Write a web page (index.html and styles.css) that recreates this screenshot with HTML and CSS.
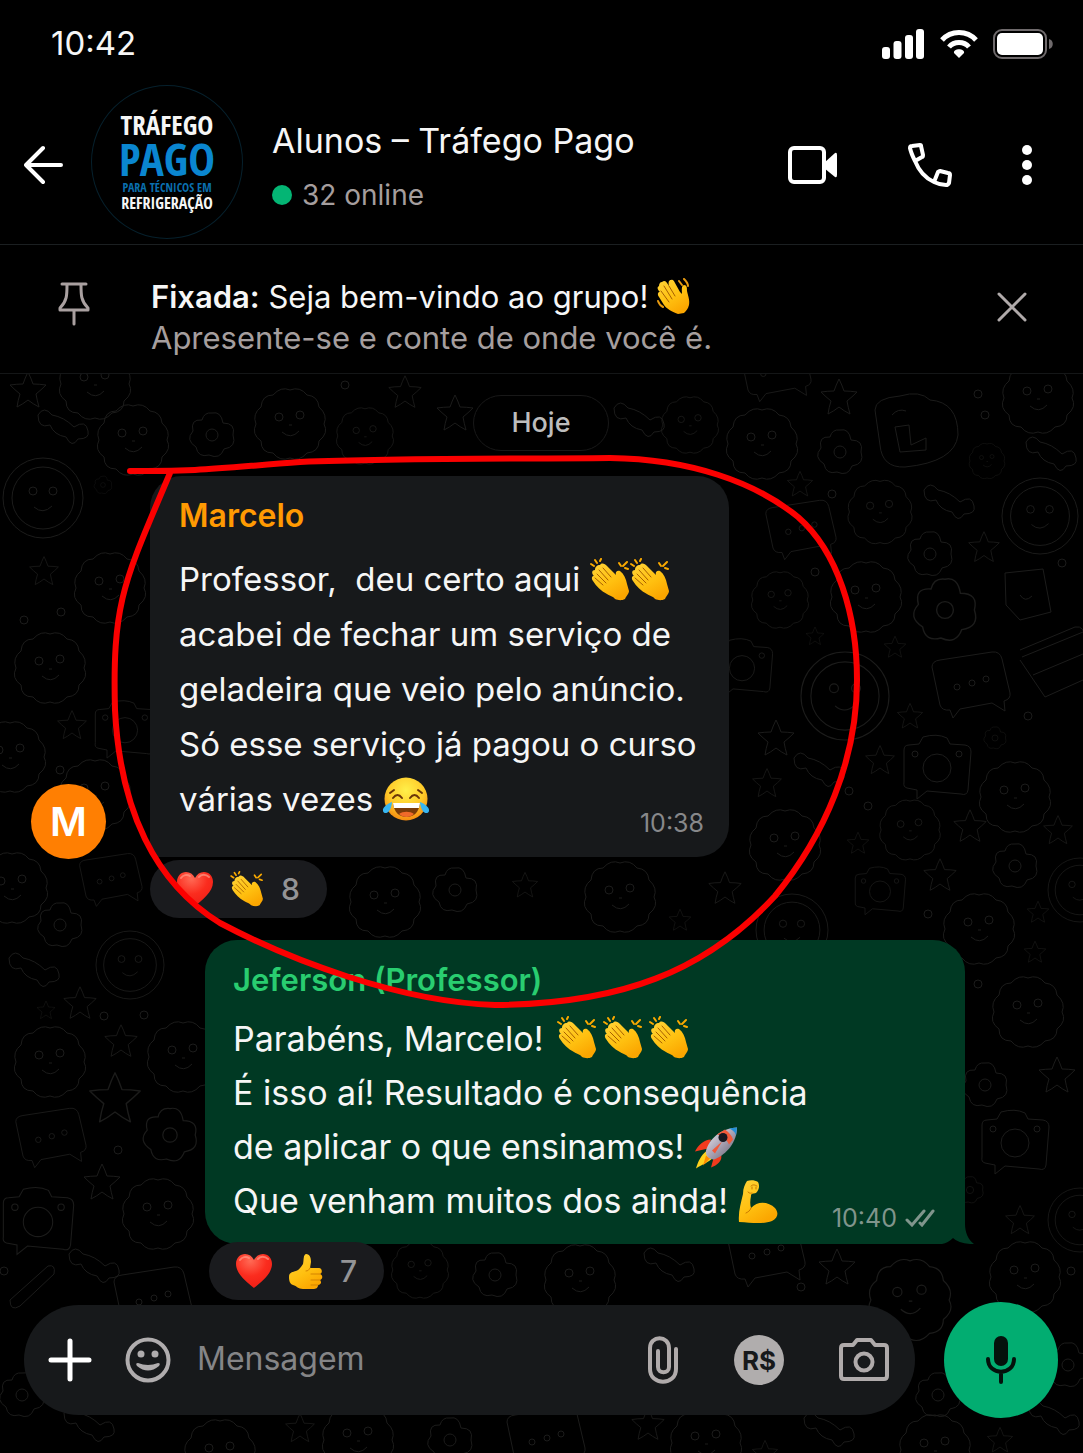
FILE: index.html
```html
<!DOCTYPE html>
<html lang="pt-BR">
<head>
<meta charset="utf-8">
<meta name="viewport" content="width=device-width, initial-scale=1">
<title>Alunos – Tráfego Pago</title>
<link rel="stylesheet" href="styles.css">
</head>
<body>
<svg class="defs" width="0" height="0" aria-hidden="true">
  <defs>
    <linearGradient id="skin" x1="0" y1="0" x2="0.6" y2="1"><stop offset="0" stop-color="#ffd338"/><stop offset="0.6" stop-color="#ffc010"/><stop offset="1" stop-color="#fba600"/></linearGradient>
    <radialGradient id="face" cx="0.5" cy="0.3" r="0.7"><stop offset="0" stop-color="#fff04a"/><stop offset="0.6" stop-color="#ffc928"/><stop offset="1" stop-color="#f48a10"/></radialGradient>
    <radialGradient id="love" cx="0.4" cy="0.2" r="0.9"><stop offset="0" stop-color="#ff6a55"/><stop offset="0.5" stop-color="#fb2c1e"/><stop offset="1" stop-color="#ec1c14"/></radialGradient>
    <linearGradient id="hull" x1="0" y1="0" x2="1" y2="1"><stop offset="0" stop-color="#f4f2f8"/><stop offset="0.5" stop-color="#a9a3b4"/><stop offset="1" stop-color="#5c5868"/></linearGradient>
  </defs>
  <symbol id="clap" viewBox="0 0 40 43">
    <path fill="url(#skin)" d="M10 7C12 4 15 6 17 8L26 17C25 14 27 12 30 13C34 16 36 21 37 26L39 33C39 36 36 38 35 41C31 43 28 42 25 41C23 38 20 38 17 36C11 33 6 28 3 23C1 20 2 18 4 18C1 15 2 12 5 12C5 9 7 7 10 7Z"/>
    <path fill="none" stroke="#a85f00" stroke-linecap="round" d="M13 10l8 9M9 12l9 10M7 16l9 9M5 20l8 7"/>
    <path fill="none" stroke="#f9a900" stroke-width="2" stroke-linecap="round" d="M1 6l3 2M5 2l2 3M11 1l-1 2M29 5l2 3M37 4l-4 4M35 10l3 1"/>
  </symbol>
  <symbol id="wave" viewBox="0 0 34 36">
    <path fill="url(#skin)" d="M5 4C7 2 9 3 10 5L12 8C11 4 12 2 14 2C16 1 17 3 18 5L23 14L25 16C25 12 24 8 27 7C30 7 30 10 30 13C31 18 33 22 32 27C31 31 29 33 27 35L21 36C14 33 10 31 7 27L2 19C0 16 1 14 3 14C0 11 0 9 2 8C2 6 3 4 5 4Z"/>
    <path fill="none" stroke="#a85f00" stroke-linecap="round" d="M12 8l6 10M7 8l8 13M4 13l8 11"/>
    <path fill="none" stroke="#e79a10" stroke-width="2" stroke-linecap="round" d="M22 3l3 4M27 1c2 2 4 4 4 7M1 23c1 3 3 5 5 6"/>
  </symbol>
  <symbol id="joy" viewBox="0 0 48 44">
    <circle cx="24" cy="22" r="21.500" fill="url(#face)"/>
    <path fill="none" stroke="#6b3508" stroke-width="2" stroke-linecap="round" d="M11 21c3-4 6-4 9 0M28 21c3-4 6-4 9 0M8 16l4-3M40 16l-4-3"/>
    <path fill="#7a3b08" d="M11 26h27c-1 9-6 14-13.500 14S12 35 11 26z"/><path fill="#fff" d="M11 26h27l-1 5H12z"/><path fill="#f06a2a" d="M17 37c4-3 11-3 15 0-4 4-11 4-15 0z"/>
    <path fill="#38b6f2" d="M10 25C7 26 0 30 1 34C2 38 9 37 10 25ZM38 25C41 26 48 30 47 34C46 38 39 37 38 25Z"/>
  </symbol>
  <symbol id="heart" viewBox="0 0 36 34">
    <path fill="url(#love)" d="M18 34C11 28 0 20 0 10C0 4 4 0 9 0C13 0 16 2 18 6C20 2 23 0 27 0C32 0 36 4 36 10C36 20 25 28 18 34Z"/>
    <path fill="none" stroke="#ff9a88" stroke-width="2" stroke-linecap="round" opacity="0.700" d="M4 6C6 3 10 2 13 4M22 5C24 2 29 2 32 5"/>
  </symbol>
  <symbol id="thumb" viewBox="0 0 34 35">
    <path fill="url(#skin)" d="M14 10C15 6 14 1 17 0C21 0 22 4 22 8L21 14H30C33 14 34 19 31 20C34 21 34 25 31 26C33 28 32 31 29 31C29 34 27 35 24 35H14C9 35 8 32 4 31C1 30 0 27 0 23C0 18 4 18 7 17C10 16 12 13 14 10Z"/>
    <path fill="none" stroke="#d48300" stroke-linecap="round" d="M31 20h-9M31 26h-9M29 31h-7M21 14c-1 2-2 3-4 3"/>
  </symbol>
  <symbol id="rocket" viewBox="0 0 44 42">
    <path fill="#ffd21e" d="M12 25L19 31C15 36 8 38 2 42C4 35 7 29 12 25Z"/><path fill="#ff8a00" d="M12 29l4 3-7 7z"/>
    <path fill="#f23a1d" d="M17 13C10 13 4 19 1 25L14 22ZM27 28C29 34 23 39 17 41L20 30Z"/>
    <path fill="url(#hull)" d="M12 24C15 13 26 2 43 1C43 15 33 28 20 33C15 33 11 29 12 24Z"/>
    <path fill="#f05a3a" d="M23 8l8-5c4 3 7 6 8 10l-4 5C33 13 28 9 23 8ZM18 24L28 15l-7 12z"/>
    <path fill="#2490d8" d="M35 2l8-1-1 8C41 5 38 3 35 2Z"/><circle cx="29" cy="11" r="4.500" fill="#171820"/>
  </symbol>
  <symbol id="biceps" viewBox="0 0 40 43">
    <path fill="url(#skin)" d="M5 14C5 8 7 4 9 1C12 0 17 0 20 2C22 6 21 10 18 13C15 14 13 13 13 16C12 21 12 25 13 28C20 20 31 22 37 28C41 33 40 38 34 41C26 44 15 43 1 42C0 32 3 23 5 14Z"/>
    <path fill="none" stroke="#c97900" stroke-linecap="round" d="M13 6c2-2 4-1 6 0M14 7v2M18 7v2M10 12c2 2 3 1 4 1M13 28c-1 3-3 4-5 5"/>
  </symbol>
</svg>

<div class="phone">
  <div class="status">
    <span class="clock">10:42</span>
    <div class="status-icons">
      <svg width="43" height="30" viewBox="0 0 43 30" fill="#fff" aria-hidden="true"><rect x="0" y="18" width="8" height="12" rx="3"/><rect x="11.500" y="12" width="8" height="18" rx="3"/><rect x="23" y="6" width="8" height="24" rx="3"/><rect x="34" y="0" width="8" height="30" rx="3"/></svg>
      <svg width="38" height="30" viewBox="0 0 38 30" fill="none" stroke="#fff" stroke-width="5" aria-hidden="true"><path d="M2 11C11 1 27 1 36 11M9 18C14 12 24 12 29 18"/><path fill="#fff" stroke="none" d="M19 29l-5-5c-1-5 11-5 10 0z"/></svg>
      <svg width="60" height="30" viewBox="0 0 60 30" aria-hidden="true"><rect x="1" y="1" width="52" height="28" rx="8" fill="none" stroke="#6f6a6c" stroke-width="2"/><rect x="4" y="4" width="46" height="22" rx="5" fill="#fff"/><path fill="#6f6a6c" d="M56 10c5 1 5 9 0 10z"/></svg>
    </div>
  </div>

  <header class="header">
    <button class="icon-btn" type="button" aria-label="Voltar"><svg width="40" height="40" viewBox="0 0 40 40" fill="none" stroke="#fff" stroke-width="4" stroke-linecap="round" stroke-linejoin="round"><path d="M37 20H2M19 3L2 20l17 17"/></svg></button>
    <div class="logo">
      <span class="logo-1">TRÁFEGO</span>
      <span class="logo-2">PAGO</span>
      <span class="logo-3">PARA TÉCNICOS EM</span>
      <span class="logo-4">REFRIGERAÇÃO</span>
    </div>
    <div class="group">
      <h1>Alunos – Tráfego Pago</h1>
      <p><span class="dot"></span>32 online</p>
    </div>
    <nav class="actions" aria-label="Ações do grupo">
      <button class="icon-btn" type="button" aria-label="Chamada de vídeo"><svg width="50" height="40" viewBox="0 0 50 40"><rect x="2" y="3" width="34" height="34" rx="4" fill="none" stroke="#fff" stroke-width="4"/><path fill="#fff" d="M36 18l11-10q2-1 2 2v20q0 3-2 2L36 23z"/></svg></button>
      <button class="icon-btn" type="button" aria-label="Ligar"><svg width="44" height="44" viewBox="0 0 44 44" fill="none" stroke="#fff" stroke-width="4" stroke-linejoin="round"><path d="M4 3L12 2Q13 2 13 3L15 12Q15 14 14 14L7 18Q3 10 2 5Q2 3 4 3ZM7 18C11 28 17 35 26 39L30 29Q31 28 32 28L40 30Q42 30 42 32L41 40Q40 42 38 42Q32 42 26 39"/></svg></button>
      <button class="icon-btn" type="button" aria-label="Mais opções"><svg width="10" height="40" viewBox="0 0 10 40" fill="#fff"><circle cx="5" cy="5" r="5"/><circle cx="5" cy="20" r="5"/><circle cx="5" cy="35" r="5"/></svg></button>
    </nav>
  </header>

  <section class="pinned" aria-label="Mensagem fixada">
    <svg class="pin" width="32" height="44" viewBox="0 0 32 44" fill="none" stroke="#a9a0a0" stroke-width="3" stroke-linecap="round" stroke-linejoin="round" aria-hidden="true"><path d="M4 2H28M9 3C9 13 9 19 2 26V28H30V26C23 19 23 13 23 3M16 28V42"/></svg>
    <p><strong>Fixada:</strong> Seja bem-vindo ao grupo! <svg class="em em-wave" role="img" aria-label="👋"><use href="#wave"/></svg><br><span>Apresente-se e conte de onde você é.</span></p>
    <button class="icon-btn close" type="button" aria-label="Fechar"><svg width="30" height="30" viewBox="0 0 30 30" fill="none" stroke="#b0aaaa" stroke-width="3" stroke-linecap="round"><path d="M2 2l26 26M28 2L2 28"/></svg></button>
  </section>

  <main class="chat">
    <svg class="wallpaper" viewBox="0 374 1083 1079" preserveAspectRatio="xMinYMin slice" fill="none" aria-hidden="true">
      <defs>
        <path id="w-star" stroke-linejoin="round" d="M0-18Q3-12 5-6Q11-6 18-5Q13 0 8 4Q9 10 11 17Q5 14 0 10Q-5 14-11 17Q-10 10-8 4Q-13 0-18-5Q-11-6-5-6Q-3-12 0-18Z"/>
        <path id="w-edge" d="M34 0Q39 9 29 17Q29 28 17 29Q9 38 0 34Q-10 38-17 29Q-29 29-29 17Q-39 10-34 0Q-38-10-29-17Q-28-29-17-29Q-9-38 0-34Q10-38 17-29Q28-28 29-17Q38-9 34 0Z"/>
        <g id="w-smile"><use href="#w-edge"/><circle cx="-11" cy="-7" r="4"/><circle cx="10" cy="-9" r="4"/><path d="M-8 8Q1 16 9 7M-1 1l3 0"/></g>
        <g id="w-ring"><circle r="40"/><circle r="31"/><circle cx="-10" cy="-7" r="4"/><circle cx="10" cy="-7" r="4"/><path d="M-9 9Q0 17 9 8"/></g>
        <g id="w-flower"><path d="M0-22Q9-24 11-12Q24-12 21 0Q25 12 12 14Q8 25-3 20Q-14 23-16 12Q-27 5-19-4Q-22-16-10-15Q-8-23 0-22Z"/><circle r="6"/></g>
        <g id="w-cam"><path d="M-33-20Q-33-25-28-25L-18-26L-14-33Q0-37 10-32L13-26L28-25Q34-24 34-18L31 20Q30 26 24 24L-10 21L-20 29V20L-30 18Q-34 17-33 12Z"/><circle cy="-2" r="14"/><circle cx="-22" cy="-16" r="3"/><circle cx="22" cy="-16" r="3"/></g>
        <g id="w-bubble"><path d="M-38-18Q-38-24-30-25L22-33Q30-34 32-26L40 8Q41 14 34 16L35 26L22 18L-10 24L-17 33L-20 25Q-28 26-30 20Z"/><circle cx="-13" cy="2" r="3"/><circle cx="2" cy="-2" r="3"/><circle cx="16" cy="-6" r="3"/></g>
        <path id="w-candy" d="M-26-12Q-20-22-12-12Q0-10 10 0Q22-8 24 4Q26 12 14 12Q8 22 2 10Q-10 8-14-2Q-26 2-26-12Z"/>
        <circle id="w-dot" r="4"/>
      </defs>
      <use href="#w-star" x="28" y="390"/><use href="#w-smile" x="95" y="384"/><use href="#w-smile" transform="translate(133 440)"/><use href="#w-candy" x="64" y="427"/><use href="#w-flower" x="212" y="435"/><use href="#w-smile" x="290" y="424"/><use href="#w-smile" transform="translate(365 436) scale(.8)"/><use href="#w-star" x="455" y="413"/><use href="#w-star" transform="translate(405 392) scale(.9)"/><use href="#w-dot" x="345" y="385"/><use href="#w-candy" x="640" y="420"/><use href="#w-smile" transform="translate(690 425) scale(.8)"/><use href="#w-bubble" transform="translate(775 372) scale(.9)"/><use href="#w-star" x="839" y="397"/><use href="#w-smile" x="762" y="444"/><use href="#w-flower" x="840" y="452"/><path d="M875 410Q875 398 900 396Q920 390 930 400Q958 402 958 435Q955 462 905 467Q882 468 880 445ZM895 427l14-2 2 20 15-7v12l-26 2ZM892 415q6-7 14-4"/><use href="#w-smile" x="1038" y="398"/><use href="#w-dot" x="978" y="394"/><use href="#w-dot" x="985" y="415"/><use href="#w-smile" transform="translate(987 461) scale(.5)"/><use href="#w-candy" x="1052" y="454"/>
      <use href="#w-ring" x="43" y="498"/><use href="#w-smile" x="110" y="588"/><use href="#w-star" transform="translate(44 571) scale(.8)"/><use href="#w-dot" x="61" y="612"/><use href="#w-dot" x="24" y="620"/><use href="#w-smile" x="50" y="668"/><use href="#w-flower" transform="translate(103 485) scale(.4)"/><use href="#w-star" transform="translate(72 725) scale(.8)"/><use href="#w-cam" transform="translate(125 732) scale(.9)"/><use href="#w-smile" x="10" y="757"/><use href="#w-dot" x="60" y="770"/><use href="#w-smile" x="95" y="795"/><use href="#w-smile" x="12" y="888"/><use href="#w-bubble" transform="translate(110 880) scale(.8)"/>
      <use href="#w-star" transform="translate(800 484) scale(.7)"/><use href="#w-dot" x="832" y="494"/><use href="#w-smile" transform="translate(880 512) scale(.9)"/><use href="#w-candy" x="950" y="502"/><use href="#w-ring" transform="translate(1040 516) scale(.95)"/><use href="#w-bubble" transform="translate(800 530) scale(.9)"/><use href="#w-flower" x="930" y="554"/><use href="#w-star" transform="translate(984 547) scale(.85)"/><use href="#w-dot" x="1062" y="563"/><use href="#w-smile" transform="translate(780 600) scale(.8)"/><use href="#w-dot" x="815" y="572"/><use href="#w-smile" x="866" y="597"/><use href="#w-flower" transform="translate(945 610) scale(1.4)"/><path d="M1005 573L1043 569L1051 612L1020 620L1006 605ZM1020 595q5 8 12 1"/><use href="#w-star" transform="translate(895 647) scale(.6)"/><use href="#w-star" transform="translate(815 636) scale(.5)"/><use href="#w-ring" transform="translate(845 696) scale(1.1)"/><use href="#w-bubble" x="970" y="685"/><path d="M1020 650L1075 627Q1085 625 1085 640M1020 660L1045 697L1083 680M1022 657L1083 632M1033 675L1083 654"/><use href="#w-cam" transform="translate(742 670) scale(.9)"/><use href="#w-star" transform="translate(910 716) scale(.7)"/><use href="#w-dot" x="1028" y="716"/><use href="#w-flower" transform="translate(995 738) scale(.5)"/><use href="#w-star" x="776" y="738"/><use href="#w-star" transform="translate(880 760) scale(.8)"/><use href="#w-cam" x="937" y="770"/><use href="#w-smile" x="1015" y="797"/><use href="#w-star" transform="translate(767 783) scale(.8)"/><use href="#w-candy" x="820" y="770"/><use href="#w-smile" transform="translate(910 830) scale(.85)"/><use href="#w-star" transform="translate(970 826) scale(.9)"/><use href="#w-star" transform="translate(1058 830) scale(.8)"/><use href="#w-dot" x="868" y="806"/><use href="#w-dot" x="849" y="791"/><use href="#w-flower" x="1015" y="866"/><use href="#w-smile" x="785" y="845"/><use href="#w-star" transform="translate(858 843) scale(.6)"/><use href="#w-star" transform="translate(940 875) scale(.9)"/><use href="#w-ring" transform="translate(1080 890) scale(.8)"/><use href="#w-star" transform="translate(725 888) scale(.9)"/><use href="#w-cam" transform="translate(880 893) scale(.75)"/><use href="#w-dot" x="928" y="914"/><use href="#w-smile" x="979" y="929"/><use href="#w-star" transform="translate(1038 912) scale(.6)"/><use href="#w-star" transform="translate(1035 952) scale(.6)"/><use href="#w-ring" transform="translate(792 930) scale(.9)"/><use href="#w-smile" x="1028" y="1012"/><use href="#w-dot" x="978" y="984"/><use href="#w-flower" x="985" y="1085"/><use href="#w-star" x="1057" y="1075"/><use href="#w-cam" transform="translate(1015 1145)"/><use href="#w-star" transform="translate(1020 1220) scale(.8)"/><use href="#w-ring" transform="translate(1080 1220) scale(.8)"/><use href="#w-flower" transform="translate(970 1190) scale(.6)"/>
      <use href="#w-smile" x="385" y="902"/><use href="#w-flower" x="455" y="890"/><use href="#w-smile" x="620" y="897"/><use href="#w-star" transform="translate(525 885) scale(.7)"/><use href="#w-star" transform="translate(680 920) scale(.6)"/>
      <use href="#w-flower" x="60" y="925"/><use href="#w-candy" x="35" y="970"/><use href="#w-ring" transform="translate(130 965) scale(.85)"/><use href="#w-star" transform="translate(80 1003) scale(.9)"/><use href="#w-dot" x="104" y="1016"/><use href="#w-dot" x="144" y="1015"/><use href="#w-star" transform="translate(46 1010) scale(.5)"/><use href="#w-smile" x="50" y="1062"/><use href="#w-star" transform="translate(121 1041) scale(.9)"/><use href="#w-smile" x="183" y="1057"/><use href="#w-star" transform="translate(115 1098) scale(1.400)"/><use href="#w-bubble" transform="translate(50 1138) scale(.9)"/><use href="#w-flower" transform="translate(170 1135) scale(1.200)"/><use href="#w-dot" x="118" y="1150"/><use href="#w-star" x="102" y="1182"/><use href="#w-smile" x="158" y="1214"/><use href="#w-cam" transform="translate(38 1224) scale(1.050)"/><use href="#w-candy" x="95" y="1266"/><use href="#w-dot" x="4" y="1271"/><path d="M10 1300L48 1266Q56 1264 54 1274L20 1306Q10 1312 10 1300Z"/><use href="#w-bubble" x="152" y="1300"/><use href="#w-smile" transform="translate(420 1270) scale(.8)"/><use href="#w-flower" x="495" y="1275"/><use href="#w-smile" x="580" y="1280"/><use href="#w-candy" x="670" y="1265"/><use href="#w-bubble" x="765" y="1254"/><use href="#w-star" x="837" y="1267"/><use href="#w-dot" x="801" y="1287"/><use href="#w-smile" x="1025" y="1277"/><use href="#w-smile" transform="translate(910 1300) scale(1.150)"/><use href="#w-dot" x="1071" y="1271"/>
      <use href="#w-flower" x="22" y="1395"/><use href="#w-candy" x="90" y="1425"/><use href="#w-smile" x="220" y="1455"/><use href="#w-star" transform="translate(300 1428) scale(.8)"/><use href="#w-smile" x="358" y="1440"/><use href="#w-flower" x="450" y="1440"/><use href="#w-bubble" x="545" y="1440"/><use href="#w-star" transform="translate(648 1424) scale(.9)"/><use href="#w-smile" x="706" y="1443"/><use href="#w-star" transform="translate(765 1453) scale(.7)"/><use href="#w-candy" x="830" y="1430"/><use href="#w-smile" x="935" y="1450"/><use href="#w-star" transform="translate(1000 1440) scale(.7)"/><use href="#w-candy" x="1055" y="1418"/><use href="#w-flower" x="1068" y="1365"/><use href="#w-flower" x="938" y="1395"/>
    </svg>

    <time class="day">Hoje</time>

    <article class="row">
      <span class="avatar">M</span>
      <div class="message">
        <div class="bubble bubble-in">
          <h2>Marcelo</h2>
          <p>Professor,&nbsp; deu certo aqui <svg class="em" role="img" aria-label="👏"><use href="#clap"/></svg><svg class="em" role="img" aria-label="👏"><use href="#clap"/></svg><br>acabei de fechar um serviço de<br>geladeira que veio pelo anúncio.<br>Só esse serviço já pagou o curso<br>várias vezes <svg class="em em-joy" role="img" aria-label="😂"><use href="#joy"/></svg></p>
          <div class="meta"><time>10:38</time></div>
        </div>
        <div class="reactions"><svg width="36" height="34" role="img" aria-label="❤️"><use href="#heart"/></svg><svg width="34" height="36" role="img" aria-label="👏"><use href="#clap"/></svg><span>8</span></div>
      </div>
    </article>

    <article class="message message-out">
      <div class="bubble bubble-out">
        <h2>Jeferson (Professor)</h2>
        <p>Parabéns, Marcelo! <span class="claps"><svg class="em" role="img" aria-label="👏"><use href="#clap"/></svg><svg class="em" role="img" aria-label="👏"><use href="#clap"/></svg><svg class="em" role="img" aria-label="👏"><use href="#clap"/></svg></span><br>É isso aí! Resultado é consequência<br>de aplicar o que ensinamos! <svg class="em em-rocket" role="img" aria-label="🚀"><use href="#rocket"/></svg><br>Que venham muitos dos ainda! <svg class="em" role="img" aria-label="💪"><use href="#biceps"/></svg></p>
        <div class="meta"><time>10:40</time><svg width="30" height="18" viewBox="0 0 30 18" fill="none" stroke="#80958c" stroke-width="3" stroke-linecap="round" role="img" aria-label="Entregue"><path d="M2 11l5 5L19 2M15 14l2 2L28 2"/></svg></div>
        <svg class="tail" width="38" height="30" viewBox="0 0 38 30" aria-hidden="true"><path fill="#003923" d="M0 0H29V10C29 18 32 26 38 30H0Z"/><path d="M6 30Q12 29 17 24Q22 29 34 30Z"/></svg>
      </div>
      <div class="reactions"><svg width="36" height="34" role="img" aria-label="❤️"><use href="#heart"/></svg><svg width="34" height="35" role="img" aria-label="👍"><use href="#thumb"/></svg><span>7</span></div>
    </article>

    <form class="composer">
      <div class="field">
        <button class="icon-btn" type="button" aria-label="Anexar"><svg width="44" height="44" viewBox="0 0 44 44" fill="none" stroke="#fff" stroke-width="5" stroke-linecap="round"><path d="M22 3v38M3 22h38"/></svg></button>
        <button class="icon-btn emoji-btn" type="button" aria-label="Emoji"><svg width="46" height="46" viewBox="0 0 46 46"><circle cx="23" cy="23" r="20.500" fill="none" stroke="#b0adae" stroke-width="4"/><circle cx="16" cy="17" r="3.500" fill="#b0adae"/><circle cx="30" cy="17" r="3.500" fill="#b0adae"/><path fill="#b0adae" d="M13 26Q23 30 33 26Q36 26 34 29Q23 38 12 29Q10 26 13 26Z"/></svg></button>
        <input type="text" placeholder="Mensagem" aria-label="Mensagem">
        <div class="tools">
          <button class="icon-btn" type="button" aria-label="Arquivo"><svg width="32" height="48" viewBox="0 0 32 48" fill="none" stroke="#b0abab" stroke-width="4" stroke-linecap="round"><path d="M29 13V33C29 50 3 50 3 33V12C3-1 22-1 22 12V31C22 38 11 38 11 31V15"/></svg></button>
          <button class="icon-btn money" type="button" aria-label="Pagamento">R$</button>
          <button class="icon-btn" type="button" aria-label="Câmera"><svg width="50" height="44" viewBox="0 0 50 44" fill="none" stroke="#b0abab" stroke-width="4" stroke-linejoin="round"><path d="M5 7H14L18 2H32L36 7H45Q48 7 48 10V38Q48 41 45 41H5Q2 41 2 38V10Q2 7 5 7Z"/><circle cx="25" cy="24" r="8.500"/></svg></button>
        </div>
      </div>
      <button class="mic" type="button" aria-label="Gravar áudio"><svg width="32" height="48" viewBox="0 0 32 48"><rect x="9" y="0" width="14" height="30" rx="7" fill="#04120c"/><path fill="none" stroke="#04120c" stroke-width="4" stroke-linecap="round" d="M3 23C3 40 29 40 29 23M16 36v10"/></svg></button>
    </form>

    <svg class="marker" width="1083" height="1079" viewBox="0 374 1083 1079" fill="none" stroke="#fb0000" stroke-width="6" stroke-linecap="round" aria-hidden="true"><path d="M130 471C200 472 230 467 300 462C400 458 500 459 610 458C690 459 755 482 798 517C838 552 857 615 857 680C857 760 825 835 775 896C705 972 620 1004 495 1005C400 1002 290 960 220 923C155 883 120 810 115 710C112 600 125 580 170 473"/></svg>
  </main>
</div>
</body>
</html>
```
FILE: styles.css
```css
* { box-sizing: border-box; }

body {
  margin: 0;
  background: #000;
  color: #f6f6f6;
  font-family: Inter, "Liberation Sans", sans-serif;
}

h1, h2, p { margin: 0; font-weight: 400; }
svg { display: block; flex: none; }
.defs { position: absolute; }

.icon-btn {
  display: flex;
  padding: 0;
  border: 0;
  background: none;
  color: inherit;
  font: inherit;
}

.phone {
  display: flex;
  flex-direction: column;
  min-height: 100vh;
}

/* Status bar */
.status {
  display: flex;
  justify-content: space-between;
  align-items: center;
  height: 84px;
  padding: 4px 30px 0 51px;
}
.clock { font-size: 33px; line-height: 40px; padding-bottom: 2px; }
.status-icons { display: flex; gap: 15px; }

/* Header */
.header {
  display: flex;
  align-items: center;
  height: 161px;
  padding: 2px 51px 0 24px;
  border-bottom: 1px solid #1b1f21;
}
.logo {
  display: flex;
  flex: none;
  flex-direction: column;
  align-items: center;
  justify-content: center;
  width: 152px;
  height: 154px;
  margin: 0 29px 6px 27px;
  border: 1px solid #06202c;
  border-radius: 50%;
  font-family: "Noto Sans ExtraCondensed", "Open Sans Condensed", "Roboto Condensed", "Liberation Sans Narrow", sans-serif;
  font-weight: 700;
  white-space: nowrap;
}
.logo-1 { font-size: 27px; line-height: 24px; }
.logo-2 { color: #0a86d0; font-size: 45px; line-height: 44px; }
.logo-3 { color: #0a6fae; font-size: 12px; line-height: 14px; }
.logo-4 { font-size: 16px; line-height: 16px; }

.group { flex: 1; min-width: 0; padding-top: 5px; }
.group h1 { font-size: 34px; line-height: 54px; white-space: nowrap; }
.group p {
  display: flex;
  align-items: center;
  gap: 10px;
  color: #a59e9e;
  font-size: 28px;
  line-height: 54px;
}
.dot { width: 20px; height: 20px; border-radius: 50%; background: #04b574; }
.actions { display: flex; align-items: center; gap: 70px; }

/* Pinned message */
.pinned {
  display: flex;
  align-items: center;
  height: 129px;
  padding: 0 56px 0 58px;
  border-bottom: 1px solid #141617;
}
.pinned p { flex: 1; margin-left: 61px; padding-top: 16px; font-size: 31px; line-height: 41px; }
.pinned strong { font-weight: 600; }
.pinned span { color: #a59e9e; }
.pin { margin-bottom: 10px; }
.close { margin-bottom: 4px; }

/* Emoji drawn inside a line of text */
.em { display: inline-block; width: 40px; height: 43px; margin: -8px 0; vertical-align: -2px; }
.em-wave { width: 34px; height: 36px; vertical-align: 2px; }
.em-joy { width: 48px; height: 44px; }
.em-rocket { width: 44px; }
.claps { display: inline-flex; gap: 6px; margin-left: 4px; vertical-align: -8px; }
.claps .em { display: block; }

/* Conversation */
.chat {
  position: relative;
  display: flex;
  flex: 1;
  flex-direction: column;
  overflow: hidden;
  padding: 21px 25px 35px 24px;
}
.wallpaper {
  position: absolute;
  inset: 0;
  width: 100%;
  height: 100%;
  stroke: #1c1c1b;
  stroke-width: 1;
}
.marker { position: absolute; top: 0; left: 0; pointer-events: none; }

.day, .row, .message-out, .composer { position: relative; }
.day {
  align-self: center;
  padding: 0 37px;
  border: 1px solid #181818;
  border-radius: 28px;
  background: #000;
  color: #bdbdbd;
  font-size: 27px;
  font-weight: 500;
  line-height: 54px;
}

.row { display: flex; align-items: flex-end; margin: 25px 0 0 7px; }
.avatar {
  flex: none;
  width: 75px;
  height: 75px;
  margin: 0 44px 59px 0;
  border-radius: 50%;
  background: #ff7f02;
  color: #fff;
  font-size: 40px;
  font-weight: 600;
  line-height: 75px;
  text-align: center;
}
.message { display: flex; flex-direction: column; align-items: flex-start; }
.message-out { margin: 22px 0 0 181px; }

.bubble {
  position: relative;
  display: grid;
  max-width: 100%;
  padding: 20px 25px 16px 29px;
  border-radius: 32px;
}
.bubble h2 { font-size: 32px; font-weight: 600; line-height: 40px; }
.bubble p { grid-area: 2 / 1; white-space: nowrap; }
.bubble-in { width: 579px; border-bottom-left-radius: 8px; background: #17191b; }
.bubble-in h2 { color: #ff9a02; }
.bubble-in p { padding: 16px 0 14px; font-size: 33px; line-height: 55px; }
.bubble-out { width: 760px; padding: 20px 30px 16px 28px; border-bottom-right-radius: 0; background: #003923; }
.bubble-out h2 { color: #29cd70; font-size: 31px; }
.bubble-out p { padding-top: 12px; font-size: 34px; line-height: 54px; }
.meta {
  display: flex;
  grid-area: 2 / 1;
  align-items: center;
  align-self: end;
  justify-self: end;
  gap: 8px;
  color: #87888a;
  font-size: 25px;
  line-height: 36px;
}
.bubble-out .meta { margin-bottom: -8px; color: #80958c; }
.tail { position: absolute; right: -9px; bottom: 0; }

.reactions {
  position: relative;
  display: flex;
  align-items: center;
  gap: 17px;
  height: 58px;
  margin-top: 3px;
  padding: 0 27px;
  border-radius: 29px;
  background: #1a1b1e;
  color: #949496;
  font-size: 30px;
  font-weight: 500;
}
.message-out .reactions { margin: -2px 0 0 4px; }

/* Composer */
.composer { display: flex; align-items: center; gap: 29px; margin-top: auto; }
.field {
  display: flex;
  flex: 1;
  align-items: center;
  min-width: 0;
  height: 110px;
  padding: 0 26px 0 24px;
  border-radius: 55px;
  background: #17191b;
}
.emoji-btn { margin: 0 26px 0 33px; }
.field input {
  flex: 1;
  min-width: 0;
  padding: 0 0 4px;
  border: 0;
  outline: 0;
  background: none;
  color: #fff;
  font: 400 32px Inter, "Liberation Sans", sans-serif;
}
.field input::placeholder { color: #858587; opacity: 1; }
.tools { display: flex; align-items: center; gap: 55px; }
.money {
  align-items: center;
  justify-content: center;
  width: 50px;
  height: 50px;
  border-radius: 50%;
  background: #b0adad;
  color: #17191b;
  font-size: 26px;
  font-weight: 700;
}
.mic {
  display: flex;
  flex: none;
  align-items: center;
  justify-content: center;
  width: 114px;
  height: 116px;
  padding: 0;
  border: 0;
  border-radius: 50%;
  background: #02ad71;
}
```
